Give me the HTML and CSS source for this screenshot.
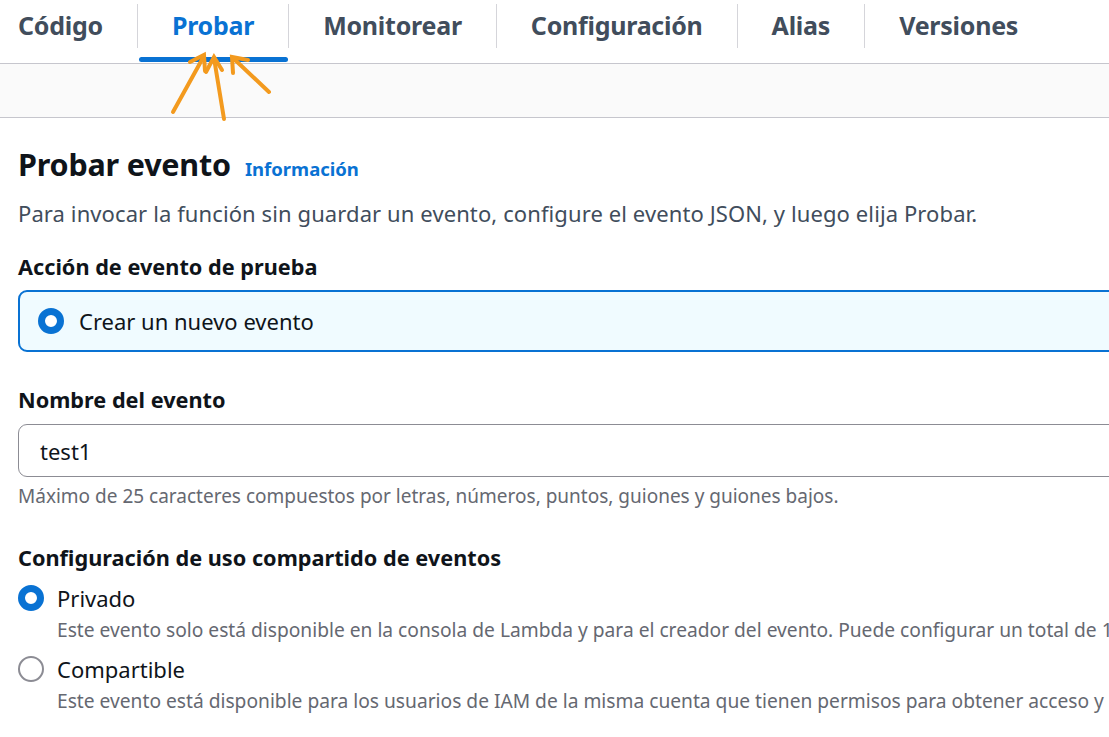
FILE: index.html
```html
<!DOCTYPE html>
<html lang="es">
<head>
<meta charset="utf-8">
<link rel="stylesheet" href="styles.css">
</head>
<body>
<div class="page">
  <nav class="tabs">
    <div class="tab first">Código</div>
    <div class="tab active">Probar</div>
    <div class="tab">Monitorear</div>
    <div class="tab">Configuración</div>
    <div class="tab">Alias</div>
    <div class="tab">Versiones</div>
  </nav>
  <div class="band"></div>
  <main class="content">
    <h1 class="title">Probar evento <a class="info">Información</a></h1>
    <p class="lead">Para invocar la función sin guardar un evento, configure el evento JSON, y luego elija Probar.</p>

    <div class="field field-action">
      <div class="label">Acción de evento de prueba</div>
      <div class="tile">
        <span class="radio checked"></span>
        <span class="tile-text">Crear un nuevo evento</span>
      </div>
    </div>

    <div class="field field-name">
      <div class="label">Nombre del evento</div>
      <div class="input">test1</div>
      <div class="hint">Máximo de 25 caracteres compuestos por letras, números, puntos, guiones y guiones bajos.</div>
    </div>

    <div class="field field-share">
      <div class="label">Configuración de uso compartido de eventos</div>
      <div class="option">
        <span class="radio checked"></span>
        <div class="opt-body">
          <div class="opt-title">Privado</div>
          <div class="opt-desc">Este evento solo está disponible en la consola de Lambda y para el creador del evento. Puede configurar un total de 10.</div>
        </div>
      </div>
      <div class="option">
        <span class="radio"></span>
        <div class="opt-body">
          <div class="opt-title">Compartible</div>
          <div class="opt-desc">Este evento está disponible para los usuarios de IAM de la misma cuenta que tienen permisos para obtener acceso y usar eventos compartibles.</div>
        </div>
      </div>
    </div>
  </main>

  <svg class="arrows" width="300" height="130" viewBox="0 0 300 130">
    <g stroke="#f39a1e" stroke-width="4" stroke-linecap="round" fill="none">
      <line x1="173" y1="112" x2="204" y2="56"/>
      <polyline points="190,62 204,55 205,71"/>
      <line x1="224" y1="119" x2="214" y2="58"/>
      <polyline points="206,72 214,57 222,70"/>
      <line x1="269" y1="92" x2="233" y2="58"/>
      <polyline points="233,73 232,57 248,60"/>
    </g>
  </svg>
</div>
</body>
</html>
```

FILE: styles.css
```css
* { box-sizing: border-box; }
html, body { margin: 0; padding: 0; background: #ffffff; }
body {
  font-family: "Noto Sans", "Open Sans", sans-serif;
  color: #0f141a;
  width: 1109px;
  height: 737px;
  overflow: hidden;
}
.page { position: relative; width: 1109px; height: 737px; overflow: hidden; }

.tabs {
  display: flex;
  align-items: flex-start;
  height: 64px;
  border-bottom: 1px solid #c6c6cd;
  padding-left: 18px;
  background: #fff;
}
.tab {
  position: relative;
  margin-top: 4px;
  height: 44px;
  padding: 0 34px;
  font-size: 25px;
  font-weight: 700;
  color: #414d5c;
  letter-spacing: -0.25px;
  line-height: 42px;
  border-left: 1px solid #d5d5da;
  white-space: nowrap;
}
.tab.first { padding-left: 0; border-left: none; }
.tab.active { color: #0972d3; }
.tab.active::after {
  content: "";
  position: absolute;
  left: 1px;
  right: 0;
  bottom: -14px;
  height: 5px;
  border-radius: 3px;
  background: #0972d3;
}

.band {
  height: 54px;
  background: #fafafa;
  border-bottom: 1px solid #c6c6cd;
}

.content { padding: 26px 0 0 18px; }

.title {
  margin: 0;
  font-size: 30.5px;
  font-weight: 700;
  line-height: 40px;
  color: #0f141a;
  display: flex;
  align-items: baseline;
  gap: 14px;
  letter-spacing: -0.2px;
}
.info {
  font-size: 18.5px;
  color: #0972d3;
  font-weight: 700;
  letter-spacing: 0;
}
.lead {
  margin: 9px 0 0;
  font-size: 22px;
  line-height: 30px;
  letter-spacing: 0.1px;
  color: #414d5c;
  white-space: nowrap;
}

.label {
  font-size: 21.7px;
  font-weight: 700;
  line-height: 30px;
  color: #0f141a;
  white-space: nowrap;
}
.field-action { margin-top: 24px; }
.field-name { margin-top: 33px; }
.field-share { margin-top: 34px; }

.tile {
  margin-top: 8px;
  height: 62px;
  width: 1200px;
  border: 2px solid #0972d3;
  border-radius: 9px;
  background: #f0fbff;
  display: flex;
  align-items: center;
  padding-left: 18px;
  gap: 15px;
}
.tile-text { font-size: 22px; color: #0f141a; }

.radio {
  flex: none;
  width: 26px;
  height: 26px;
  border-radius: 50%;
  border: 2px solid #8c8c94;
  background: #fff;
}
.radio.checked {
  border: 7px solid #0972d3;
}

.input {
  margin-top: 9px;
  width: 1200px;
  height: 53px;
  border: 1px solid #8c8c94;
  border-radius: 9px;
  padding-left: 21px;
  display: flex;
  align-items: center;
  font-size: 22px;
  color: #0f141a;
}
.hint {
  margin-top: 6px;
  font-size: 19px;
  line-height: 26px;
  color: #656871;
  white-space: nowrap;
}

.option {
  display: flex;
  gap: 13px;
  margin-top: 7px;
}
.field-share .label + .option { margin-top: 10px; }
.option .radio { margin-top: 2px; }
.opt-title { font-size: 22px; line-height: 30px; color: #0f141a; }
.opt-desc {
  font-size: 19.2px;
  line-height: 34px;
  color: #656871;
  white-space: nowrap;
}

.arrows { position: absolute; left: 0; top: 0; pointer-events: none; }
```
